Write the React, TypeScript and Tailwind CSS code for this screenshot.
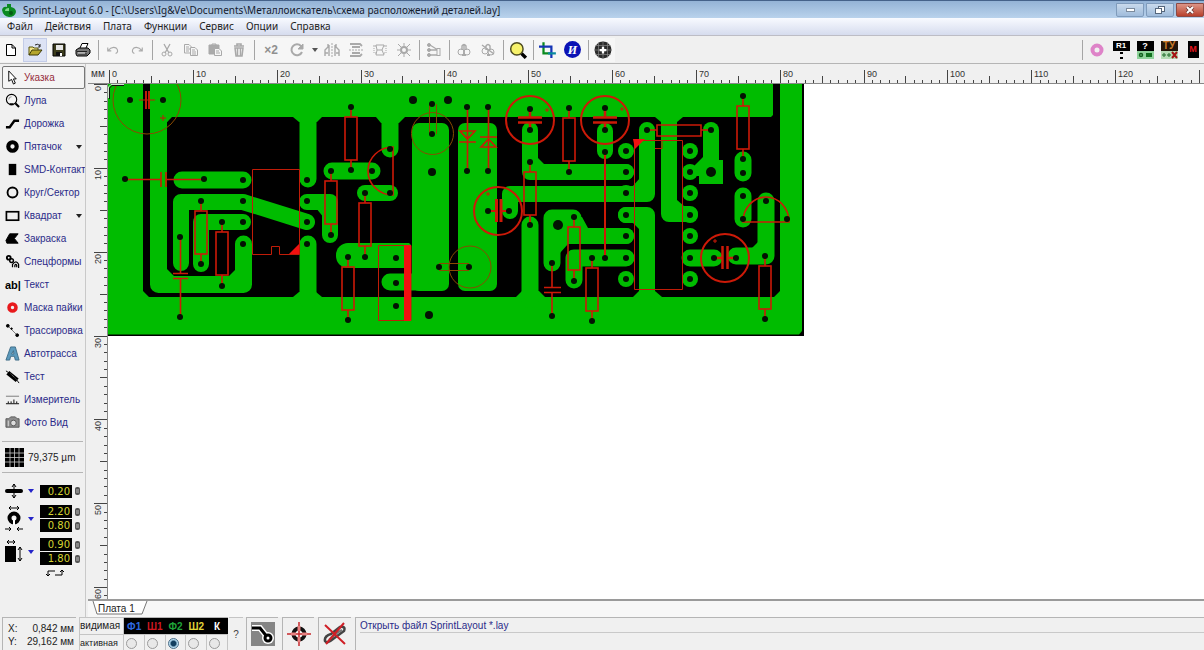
import React, { useEffect, useState } from "react";

interface ToolItem {
  label: string;
  icon: React.ReactNode;
  menu?: boolean;
}

const Icon: React.FC<{ children: React.ReactNode; className?: string }> = ({
  children,
  className = "w-4 h-4",
}) => (
  <svg viewBox="0 0 16 16" className={`${className} shrink-0`} fill="none" stroke="currentColor">
    {children}
  </svg>
);

const menuItems = ["Файл", "Действия", "Плата", "Функции", "Сервис", "Опции", "Справка"];

const tools: ToolItem[] = [
  {
    label: "Указка",
    icon: <path d="M4 1 V12 L7 10 L9 15 L11 14 L9 9.500 H12 Z" fill="#fff" />,
  },
  {
    label: "Лупа",
    icon: (
      <>
        <circle cx="7" cy="7" r="5.500" strokeWidth="1.200" fill="#f4f4f4" />
        <path d="M4 7 A3 3 0 0 1 7 4" stroke="#888" />
        <path d="M5 12 H9 M11 11 L15 15" strokeWidth="2.200" />
      </>
    ),
  },
  {
    label: "Дорожка",
    icon: <path d="M1 12 H5 L10 5 H15" strokeWidth="2.600" />,
  },
  {
    label: "Пятачок",
    menu: true,
    icon: <circle cx="8" cy="8" r="4.500" strokeWidth="4.400" />,
  },
  {
    label: "SMD-Контакт",
    icon: <rect x="4" y="2" width="8" height="12" fill="#000" stroke="none" />,
  },
  {
    label: "Круг/Сектор",
    icon: <circle cx="8" cy="8" r="5.300" strokeWidth="2" />,
  },
  {
    label: "Квадрат",
    menu: true,
    icon: <rect x="1.500" y="4" width="13" height="9" strokeWidth="1.800" />,
  },
  {
    label: "Закраска",
    icon: <path d="M1 10 L5 3 H14 L10 8 L14 13 H2 Z" fill="#000" />,
  },
  {
    label: "Спецформы",
    icon: (
      <>
        <circle cx="4" cy="4" r="2" strokeWidth="2" />
        <circle cx="7" cy="7" r="2" strokeWidth="1.500" />
        <path d="M8 14 V11 Q12 6 14.500 11 V15 M10.500 14 V12 Q11.500 10 12.500 12 V14" strokeWidth="1.300" />
      </>
    ),
  },
  { label: "Текст", icon: null },
  {
    label: "Маска пайки",
    icon: <circle cx="8" cy="8" r="3.700" stroke="#e8191c" strokeWidth="3.800" />,
  },
  {
    label: "Трассировка",
    icon: (
      <>
        <path d="M3 3 L13 13" stroke="#777" />
        <circle cx="3" cy="3" r="1.500" fill="#000" />
        <circle cx="7" cy="6" r="0.800" fill="#000" />
        <circle cx="13" cy="13" r="1.500" fill="#000" />
      </>
    ),
  },
  {
    label: "Автотрасса",
    icon: (
      <path
        d="M1 15 L6 1 H11 L15 15 H11 L10 11 H6 L5 15 Z M7 8.500 H9.500 L9 5 Z"
        fill="#5c9abd"
        stroke="#3f6d88"
      />
    ),
  },
  {
    label: "Тест",
    icon: (
      <>
        <path d="M1 2 L4 4 M12 11 L15 15" />
        <path d="M3 4 L13 12" strokeWidth="5" />
        <path d="M6 5 L12 11" stroke="#999" strokeDasharray="1 1" />
      </>
    ),
  },
  {
    label: "Измеритель",
    icon: (
      <>
        <path d="M1 4.500 H15" stroke="#777" />
        <path d="M1 12.500 H15 M3.500 12 V10 M6.500 12 V10 M9.500 12 V8 M12.500 12 V10" />
      </>
    ),
  },
  {
    label: "Фото Вид",
    icon: (
      <>
        <path d="M1 4 H4 L6 2 H11 L13 4 H15 V13 H1 Z" fill="#8b8b8b" stroke="#555" />
        <circle cx="9" cy="8.500" r="3" fill="#ddd" stroke="#555" />
        <path d="M3.500 6 V12" stroke="#ddd" />
      </>
    ),
  },
];

const Separator = () => (
  <div className="w-[6px] h-6 flex justify-center shrink-0">
    <div className="w-px h-5 self-center bg-[#a5a5a5]" />
  </div>
);

const ToolButton: React.FC<{
  label: string;
  active?: boolean;
  disabled?: boolean;
  children: React.ReactNode;
}> = ({ label, active, disabled, children }) => (
  <button
    aria-label={label}
    disabled={disabled}
    className={`w-6 h-6 shrink-0 flex items-center justify-center ${
      active ? "bg-[#dde3f5] border border-[#c3cce8]" : ""
    } ${disabled ? "text-[#a9a9a9]" : "text-black"}`}
  >
    {children}
  </button>
);

const TitleBar = () => (
  <header className="h-[18px] shrink-0 flex items-center border-t border-[#45628a] bg-linear-to-b from-[#94b3d6] to-[#b9d2ec]">
    <svg viewBox="0 0 16 16" className="w-4 h-4 ml-px">
      <path d="M1 8 Q2 4 6 5 L6 2 H10 V5 Q15 6 15 10 Q14 15 8 15 Q2 14 1 8 Z" fill="#0a8a22" />
      <path d="M4 9 Q4 6 8 6 V9 Z" fill="#7fd88a" />
      <circle cx="10" cy="11" r="2" fill="#065c14" />
    </svg>
    <h1 className="ml-[6px] flex-1 text-[10px] leading-4 text-[#16202e] font-['Noto_Sans',sans-serif] whitespace-nowrap">
      Sprint-Layout 6.0 - [C:\Users\Ig&amp;Ve\Documents\Металлоискатель\схема расположений деталей.lay]
    </h1>
    <div className="flex gap-[2px] h-[14px]">
      <button
        aria-label="Свернуть"
        className="w-7 rounded-b-xs border border-[#7f9bbb] bg-linear-to-b from-[#c9daec] to-[#a0bcdb] flex items-center justify-center"
      >
        <span className="w-[9px] h-1 border border-[#7c8b9d] bg-white" />
      </button>
      <button
        aria-label="Восстановить"
        className="w-7 rounded-b-xs border border-[#7f9bbb] bg-linear-to-b from-[#c9daec] to-[#a0bcdb] flex items-center justify-center"
      >
        <svg viewBox="0 0 12 10" className="w-3 h-[10px]" fill="#fff" stroke="#56677c">
          <rect x="4.500" y="1.500" width="6" height="5" />
          <rect x="1.500" y="3.500" width="6" height="5" />
        </svg>
      </button>
      <button
        aria-label="Закрыть"
        className="w-7 rounded-b-xs border border-[#8c4a44] bg-linear-to-b from-[#dc9587] to-[#b8402c] flex items-center justify-center"
      >
        <svg viewBox="0 0 12 10" className="w-3 h-[10px]">
          <path d="M3 2 L9 8 M9 2 L3 8" stroke="#6a3a36" strokeWidth="3.600" />
          <path d="M3 2 L9 8 M9 2 L3 8" stroke="#fff" strokeWidth="2" />
        </svg>
      </button>
    </div>
  </header>
);

const Toolbar = () => (
  <div className="h-7 shrink-0 flex items-center border-b border-[#b5b5b5] bg-[#f0f0f0]">
    <div className="flex items-center -ml-px bg-[#f6f6f6]">
      <ToolButton label="Новый">
        <Icon>
          <path d="M3.500 2.500 H9 L12.500 6 V13.500 H3.500 Z M9 2.500 V6 H12.500" fill="#fff" />
        </Icon>
      </ToolButton>
      <ToolButton label="Открыть" active>
        <Icon>
          <path d="M2 13 V5 H6 L7 6 H11 V8" fill="#f2e58a" stroke="#55520a" />
          <path d="M2 13 L5 8 H15 L11 13 Z" fill="#b5a62e" stroke="#3d3a08" />
          <path d="M8 3 Q11 1 13 4 M13 2 V5 H11" stroke="#222" />
        </Icon>
      </ToolButton>
      <ToolButton label="Сохранить">
        <Icon>
          <path d="M2 2 H14 V14 H2 Z" fill="#3c3c1c" />
          <rect x="5" y="3" width="7" height="5" fill="#e6e6e6" stroke="none" />
          <rect x="5" y="10" width="6" height="4" fill="#111" stroke="none" />
          <rect x="9" y="11" width="2" height="3" fill="#fff" stroke="none" />
        </Icon>
      </ToolButton>
      <ToolButton label="Печать">
        <Icon>
          <path d="M5 6 L7 1.500 H13 L11 6" fill="#fff" />
          <path d="M1 8 L4 6 H13 L15 8 V11 L12 14 H2 L1 12 Z" fill="#777" />
          <path d="M2 9.500 H12 M3 12 H12" stroke="#222" />
          <path d="M3 11 H10" stroke="#eee" />
        </Icon>
      </ToolButton>
      <Separator />
      <ToolButton label="Отменить" disabled>
        <Icon className="w-[14px] h-[14px]">
          <path d="M2 5 V9 H6 M2 9 Q7 3 12 6 Q15 10 11 12" strokeWidth="1.300" />
        </Icon>
      </ToolButton>
      <ToolButton label="Повторить" disabled>
        <Icon className="w-[14px] h-[14px]">
          <path d="M14 5 V9 H10 M14 9 Q9 3 4 6 Q1 10 5 12" strokeWidth="1.300" />
        </Icon>
      </ToolButton>
      <Separator />
      <ToolButton label="Вырезать" disabled>
        <Icon>
          <path d="M5 2 L10 11 M11 2 L6 11" strokeWidth="1.300" />
          <circle cx="5" cy="12" r="2" />
          <circle cx="11" cy="12" r="2" />
        </Icon>
      </ToolButton>
      <ToolButton label="Копировать" disabled>
        <Icon>
          <path d="M1.500 2.500 H6 L8.500 5 V11 H1.500 Z M3 5 H6 M3 7 H7 M3 9 H6" />
          <path d="M7.500 5.500 H12 L14.500 8 V13.500 H7.500 Z M9 8 H12 M9 10 H13 M9 12 H13" fill="#f6f6f6" />
        </Icon>
      </ToolButton>
      <ToolButton label="Вставить" disabled>
        <Icon>
          <path d="M2 3 H12 V12 H2 Z" fill="#aaa" />
          <path d="M5 2 H9 V4 H5 Z" />
          <path d="M7.500 6.500 H12 L14.500 9 V13.500 H7.500 Z M9 9 H12 M9 11 H13" fill="#f6f6f6" />
        </Icon>
      </ToolButton>
      <ToolButton label="Удалить" disabled>
        <Icon>
          <path d="M3 4 H13 M6 4 V2 H10 V4" strokeWidth="1.600" />
          <path d="M4 6 H12 L11 14 H5 Z M6.500 6 V14 M9.500 6 V14" strokeWidth="1.500" />
        </Icon>
      </ToolButton>
      <Separator />
      <button
        disabled
        className="w-7 h-6 shrink-0 text-[12px] leading-6 font-bold text-[#909090] font-['Liberation_Sans',sans-serif]"
      >
        ×2
      </button>
      <ToolButton label="Повернуть" disabled>
        <Icon>
          <path d="M12 4 A5.500 5.500 0 1 0 13 10" strokeWidth="2" />
          <path d="M14 2 V7 H9 Z" fill="currentColor" />
        </Icon>
      </ToolButton>
      <button aria-label="Угол поворота" className="w-[11px] h-6 shrink-0 flex items-center justify-center">
        <svg viewBox="0 0 6 4" className="w-[6px] h-1">
          <path d="M0 0 H6 L3 4 Z" fill="#555" />
        </svg>
      </button>
      <ToolButton label="Отразить по горизонтали" disabled>
        <Icon>
          <path d="M8 1 V15" strokeDasharray="2 1" />
          <path d="M1 14 V8 L4 5 V2 M1 11 H4 M5 3 V14 M15 14 V8 L12 5 V2 M15 11 H12 M11 3 V14" strokeWidth="1.400" />
        </Icon>
      </ToolButton>
      <ToolButton label="Отразить по вертикали" disabled>
        <Icon>
          <path d="M1 8 H15" strokeDasharray="2 1" />
          <path d="M2 2 H12 L14 4 M4 5 H12 M2 14 H12 L14 12 M4 11 H12" strokeWidth="1.800" />
        </Icon>
      </ToolButton>
      <ToolButton label="Выровнять" disabled>
        <Icon>
          <path d="M1 4 H4 M12 4 H15 M4 3 H12 L10 8 H5 Z M5 8 L4 13 H12 L10 8" />
          <path d="M2 6 V11 H4 M14 6 V11 H12" strokeDasharray="1 1" />
        </Icon>
      </ToolButton>
      <ToolButton label="Привязать к сетке" disabled>
        <Icon>
          <circle cx="8" cy="8" r="3" strokeWidth="2" />
          <path d="M8 1 V4 M8 12 V15 M1 8 H4 M12 8 H15 M2 2 L5 5 M11 5 L14 2 M2 14 L5 11 M11 11 L14 14" />
        </Icon>
      </ToolButton>
      <Separator />
      <ToolButton label="Соединения" disabled>
        <Icon>
          <path d="M4 3 L12 8 V13 H4 M4 8 H12" strokeWidth="1.300" />
          <circle cx="3" cy="3" r="1.500" fill="currentColor" />
          <circle cx="3" cy="8" r="1.500" fill="currentColor" />
          <circle cx="3" cy="13" r="1.500" fill="currentColor" />
          <rect x="11" y="6.500" width="3" height="7" fill="#f6f6f6" />
        </Icon>
      </ToolButton>
      <Separator />
      <ToolButton label="Группировать" disabled>
        <Icon>
          <path d="M6 8 V4 Q8 1 10 4 V8 M8 3 V13" strokeWidth="1.400" />
          <circle cx="5" cy="10" r="3" />
          <circle cx="11" cy="10" r="3" />
          <path d="M6 13 H10" strokeWidth="2" />
        </Icon>
      </ToolButton>
      <ToolButton label="Разгруппировать" disabled>
        <Icon>
          <path d="M6 8 V4 Q8 1 10 4 V8 M2 3 L14 12" strokeWidth="1.400" />
          <circle cx="5" cy="9" r="3" />
          <circle cx="11" cy="10" r="3" />
          <path d="M7 13 H10" strokeWidth="2" />
        </Icon>
      </ToolButton>
      <Separator />
      <ToolButton label="Масштаб">
        <Icon className="w-[18px] h-[18px]">
          <path d="M11 11 L15 15" strokeWidth="3" />
          <circle cx="7" cy="7" r="5.500" fill="#f7f26b" stroke="#4d4b20" strokeWidth="1.300" />
        </Icon>
      </ToolButton>
      <Separator />
      <ToolButton label="Обрезка">
        <Icon className="w-[18px] h-[18px]">
          <path d="M4 1 V11 H11" stroke="#0a8a1e" strokeWidth="2" />
          <path d="M0 5 H11 V15" stroke="#1535b5" strokeWidth="2" />
          <path d="M8 11 H15" stroke="#0a8a9e" strokeWidth="2" />
        </Icon>
      </ToolButton>
      <button
        aria-label="Информация"
        className="w-[17px] h-[17px] mx-1 shrink-0 rounded-full bg-[#0b12b5] text-white text-[12px] leading-4 italic font-bold font-['Liberation_Serif',serif]"
      >
        И
      </button>
      <Separator />
      <ToolButton label="Металлизация">
        <Icon className="w-[18px] h-[18px]">
          <circle cx="8" cy="8" r="4.500" stroke="#2b2b2b" strokeWidth="6" />
          <path
            d="M4 1 V15 M8 0 V16 M12 1 V15 M1 4 H15 M0 8 H16 M1 12 H15"
            stroke="#8a8a8a"
            strokeWidth="0.600"
          />
          <path d="M8 5 V11 M5 8 H11" stroke="#fff" strokeWidth="2" />
        </Icon>
      </ToolButton>
    </div>
    <div className="flex-1" />
    <div className="flex items-center">
      <Separator />
      <ToolButton label="Переходное отверстие">
        <Icon>
          <circle cx="8" cy="8" r="4.500" stroke="#de83c8" strokeWidth="4" />
        </Icon>
      </ToolButton>
      <button className="w-6 h-6 shrink-0 flex flex-col items-center justify-center">
        <span className="w-[17px] h-[10px] bg-black text-white text-[8px] leading-[10px] font-bold font-['Liberation_Sans',sans-serif]">
          R1
        </span>
        <span className="w-[3px] h-[7px] border-y-2 border-black mt-px" />
      </button>
      <button className="w-6 h-6 shrink-0 flex flex-col items-center justify-center">
        <span className="w-[17px] h-[10px] bg-black text-white text-[9px] leading-[10px] font-bold font-['Liberation_Sans',sans-serif]">
          ?
        </span>
        <svg viewBox="0 0 17 8" className="w-[17px] h-2">
          <rect width="17" height="8" fill="#8fd39b" />
          <circle cx="4" cy="4" r="1.500" fill="none" stroke="#12611e" strokeWidth="1.500" />
          <rect x="9" y="2" width="6" height="4" fill="#12701e" />
        </svg>
      </button>
      <button className="w-6 h-6 shrink-0 flex flex-col items-center justify-center">
        <span className="w-[17px] h-[10px] bg-[#24160a] text-[#c87a28] text-[10px] leading-[10px] font-bold font-['Liberation_Sans',sans-serif]">
          ТУ
        </span>
        <svg viewBox="0 0 17 8" className="w-[17px] h-2">
          <rect width="17" height="8" fill="#b5dcb5" />
          <circle cx="3" cy="4" r="1.200" fill="none" stroke="#12611e" />
          <circle cx="8" cy="4" r="1.200" fill="none" stroke="#12611e" />
          <path d="M11 1 L16 7 M16 1 L11 7" stroke="#a51414" strokeWidth="2" />
        </svg>
      </button>
      <button className="w-6 h-6 shrink-0 flex items-center justify-center -mr-px">
        <span className="w-[11px] h-[17px] bg-black text-[#e0141c] text-[9px] leading-[17px] font-bold font-['Liberation_Sans',sans-serif]">
          M
        </span>
      </button>
    </div>
  </div>
);

const Arrow = () => (
  <svg viewBox="0 0 6 4" className="w-[6px] h-1 shrink-0">
    <path d="M0 0 H6 L3 4 Z" fill="#2424c8" />
  </svg>
);

const SizeInput: React.FC<{ label: string; value: string }> = ({ label, value }) => (
  <div className="flex items-center gap-[3px]">
    <input
      aria-label={label}
      defaultValue={value}
      className="w-8 h-[13px] bg-black text-[#d6d432] text-[10px] leading-3 text-right pr-[2px] font-['DejaVu_Sans',sans-serif]"
    />
    <span className="w-[5px] h-2 rounded-xs border-x border-y-2 border-[#555] bg-[#888]" />
  </div>
);

const SidePanel = () => {
  const [active, setActive] = useState("Указка");

  return (
    <aside className="w-[86px] shrink-0 pt-[2px] bg-[#f0f0f0] border-r border-[#c9c9c9] overflow-hidden font-['Liberation_Sans',sans-serif]">
      {tools.map((tool) => (
        <button
          key={tool.label}
          onClick={() => setActive(tool.label)}
          className={`w-[83px] h-[23px] ml-[2px] pl-[2px] flex items-center text-[10px] whitespace-nowrap border ${
            active === tool.label
              ? "border-[#777] rounded-xs bg-[#f4f4f4] text-[#962c3c]"
              : "border-transparent text-[#2a2a88]"
          }`}
        >
          {tool.icon ? (
            <Icon className="w-[15px] h-[15px] text-black">{tool.icon}</Icon>
          ) : (
            <span className="w-[15px] text-[11px] leading-3 font-bold text-black">ab|</span>
          )}
          <span className="ml-1">{tool.label}</span>
          {tool.menu && (
            <svg viewBox="0 0 6 4" className="w-[6px] h-1 ml-auto mr-[2px]">
              <path d="M0 0 H6 L3 4 Z" fill="#222" />
            </svg>
          )}
        </button>
      ))}

      <div className="mt-[7px] mx-[2px] h-8 flex items-center gap-1 border-y border-[#b5b5b5] pl-[3px] text-[10px] text-[#222]">
        <svg viewBox="0 0 19 19" className="w-[19px] h-[19px]">
          <rect width="19" height="19" fill="#000" />
          <path
            d="M0 5 H19 M0 9.500 H19 M0 14 H19 M5 0 V19 M9.500 0 V19 M14 0 V19"
            stroke="#c9c9c9"
            strokeWidth="0.800"
          />
        </svg>
        <span>79,375 µm</span>
      </div>

      <div className="mt-[10px] pl-[5px] flex flex-col gap-[6px]">
        <div className="flex items-center gap-[5px]">
          <Icon className="w-[18px] h-4 text-black">
            <path d="M1 8 H15" strokeWidth="4" strokeLinecap="round" />
            <path d="M8 1 V15 M6 4 L8 1 L10 4 M6 12 L8 15 L10 12" />
          </Icon>
          <Arrow />
          <div className="ml-[1px]">
            <SizeInput label="Ширина дорожки" value="0.20" />
          </div>
        </div>
        <div className="flex items-center gap-[5px]">
          <svg viewBox="0 0 18 27" className="w-[18px] h-[27px]" fill="none" stroke="#000">
            <path d="M4 3 H14 M6 1 L4 3 L6 5 M12 1 L14 3 L12 5" />
            <circle cx="9" cy="13" r="4.500" strokeWidth="4" />
            <path d="M9 13 V20" stroke="#fff" strokeWidth="2" />
            <path d="M0 24 H6 M4 22 L6 24 L4 26 M18 24 H12 M14 22 L12 24 L14 26" />
          </svg>
          <Arrow />
          <div className="ml-[1px] flex flex-col gap-px">
            <SizeInput label="Внешний диаметр" value="2.20" />
            <SizeInput label="Диаметр отверстия" value="0.80" />
          </div>
        </div>
        <div className="flex items-center gap-[5px]">
          <svg viewBox="0 0 18 27" className="w-[18px] h-[27px]" fill="none" stroke="#000">
            <path d="M2 4 H10 M4 2 L2 4 L4 6 M8 2 L10 4 L8 6" />
            <rect x="0" y="8" width="11" height="16" fill="#000" stroke="none" />
            <path d="M15 9 V23 M13 12 L15 9 L17 12 M13 20 L15 23 L17 20" />
          </svg>
          <Arrow />
          <div className="ml-[1px] flex flex-col gap-px">
            <SizeInput label="Ширина контакта" value="0.90" />
            <SizeInput label="Высота контакта" value="1.80" />
          </div>
        </div>
      </div>
      <button aria-label="Поменять местами" className="block ml-[46px] mt-1">
        <svg viewBox="0 0 18 8" className="w-[18px] h-2" fill="none" stroke="#000">
          <path d="M2 7 V2 H9 M0 5 L2 7 L4 5 M16 1 V6 H9 M14 3 L16 1 L18 3" />
        </svg>
      </button>
    </aside>
  );
};

// ruler scale: 84 px for 10 mm
const SCALE = 8.384;
const tickPos = (mm: number) => Math.round(mm * SCALE);
const marksFor = (size: number) =>
  Array.from({ length: Math.max(0, Math.floor(size / SCALE) + 1) }, (_, i) => i);

// canvas area = window minus the bars round it
const useCanvasSize = () => {
  const read = () => ({ width: window.innerWidth - 108, height: window.innerHeight - 136 });
  const [size, setSize] = useState(read);

  useEffect(() => {
    const onResize = () => setSize(read());
    window.addEventListener("resize", onResize);
    return () => window.removeEventListener("resize", onResize);
  }, []);

  return size;
};

const TopRuler: React.FC<{ width: number }> = ({ width }) => (
  <div className="h-5 shrink-0 flex bg-[#f0f0f0] border-b border-[#888] font-['Liberation_Sans',sans-serif]">
    <span className="w-5 shrink-0 pl-[3px] text-[10px] leading-5 text-[#333]">мм</span>
    <svg className="flex-1 h-[19px]">
      {marksFor(width).map((mm) => (
        <g key={mm}>
          <rect
            x={tickPos(mm) + 1}
            y={mm % 10 === 0 ? 6 : mm % 5 === 0 ? 12 : 16}
            width="1"
            height="14"
            fill="#444"
          />
          {mm % 10 === 0 && tickPos(mm) + 20 < width && (
            <text x={tickPos(mm) + 4} y="13" fontSize="9" fill="#333">
              {mm}
            </text>
          )}
        </g>
      ))}
    </svg>
  </div>
);

const SideRuler: React.FC<{ height: number }> = ({ height }) => (
  <svg className="w-5 h-full shrink-0 bg-[#f0f0f0] border-r border-[#888] font-['Liberation_Sans',sans-serif]">
    {marksFor(height).map((mm) => (
      <g key={mm}>
        <rect
          x={mm % 10 === 0 ? 6 : mm % 5 === 0 ? 12 : 16}
          y={tickPos(mm)}
          width="14"
          height="1"
          fill="#444"
        />
        {mm % 10 === 0 && (
          <text
            transform={`translate(13 ${tickPos(mm) + 2}) rotate(-90)`}
            textAnchor="end"
            fontSize="9"
            fill="#333"
          >
            {mm}
          </text>
        )}
      </g>
    ))}
  </svg>
);

// x, y, radius
const holes: [number, number, number][] = [
  [130, 100, 3], [163, 100, 3], [125, 179, 3], [204, 179, 3], [201, 201, 3],
  [180, 237, 3], [222, 222, 3], [201, 264, 3], [222, 286, 3], [180, 317, 3],
  [243, 180, 3], [243, 201, 3], [243, 222, 3], [243, 244, 3],
  [307, 180, 3], [307, 201, 3], [307, 222, 3], [307, 244, 3],
  [351, 107, 3], [331, 171, 3], [351, 170, 3], [372, 171, 3], [390, 149, 3],
  [365, 193, 3], [390, 193, 3], [331, 235, 3], [348, 257, 3], [365, 257, 3],
  [396, 258, 3], [396, 283, 3], [396, 306, 3], [348, 320, 3], [429, 315, 4],
  [413, 100, 4], [432, 104, 3], [448, 100, 4], [432, 134, 3], [432, 172, 4],
  [467, 107, 3], [488, 107, 3], [467, 171, 3], [488, 171, 3], [488, 211, 3],
  [439, 267, 3], [469, 267, 3], [530, 109, 3], [530, 130, 3], [530, 162, 3],
  [569, 108, 3], [569, 172, 3], [605, 108, 3], [605, 130, 3], [605, 152, 3],
  [509, 211, 3], [530, 225, 3], [558, 225, 5], [574, 217, 3], [552, 263, 3],
  [552, 316, 3], [574, 281, 3], [592, 258, 3], [605, 258, 3], [592, 321, 3],
  [647, 130, 3], [711, 130, 3], [711, 172, 5], [743, 96, 3], [743, 159, 3],
  [743, 173, 3], [743, 196, 3], [743, 219, 3], [766, 201, 3], [787, 219, 3],
  [765, 256, 3], [765, 319, 3], [714, 258, 3], [736, 258, 3],
];

const dipRows = [151, 172, 193, 215, 236, 258, 279];

// x, upper pad, lower pad
const resistors: [number, number, number][] = [
  [201, 201, 264], [222, 222, 286], [351, 107, 170], [331, 171, 235],
  [365, 193, 257], [348, 257, 320], [530, 162, 225], [569, 108, 172],
  [574, 217, 281], [592, 258, 321], [743, 96, 159], [765, 256, 319],
];

const Board = () => (
  <svg viewBox="108 84 696 252" className="w-[696px] h-[252px] block shrink-0">
    <rect x="108" y="84" width="696" height="252" fill="#000" />
    <path d="M108 84 H802 V331 L799 334.500 H108 Z" fill="#00bc00" />
    <path
      d="M143 84 H160 V117 H167 V122 L172 117 H771 L773 115 V84 H780 V291 L774 297 H149 L143 291 Z"
      fill="#000"
    />

    {/* copper */}
    <g fill="#00bc00">
      <path d="M160 84 H170 V118 L167 122 H160 Z" />
      <path d="M293 117 L299 122 H317 L322 117 Z" />
      <path d="M376 117 L381 123 H399 L405 117 Z" />
      <path d="M655 117 L661 122 H677 L683 117 Z" />
      <path d="M293 297 L299 292 H316 L322 297 Z" />
      <path d="M516 297 L522 291 H539 L545 297 Z" />
      <path d="M633 297 L639 291 H655 L662 297 Z" />
      <path d="M166 268 V277 H175 Z M236 269 V277 H228 Z" />
      <path d="M324 208 V218 L316 208 Z" />
      <rect x="412" y="123" width="37" height="168" rx="7" />
      <rect x="458" y="123" width="39" height="168" rx="7" />
      <rect x="336" y="243" width="72" height="25" rx="12" />
      <path d="M390 243 H409 L411 245 V268 H390 Z" />
      <path d="M538 158 V166 H546 Z" />
      <path d="M552 217 H582 L588 228 V244 H568 L560 253 H552 Z" />
      <path d="M703 157 L694 166 V176 H699 V184 H723 V160 H719 Z" />
      <path d="M677 200 V210 H686 L684 206 Z" />
      <path d="M760 240 V250 H750 Z" />
      <path d="M632 222 H640 V230 Z M640 178 V187 H632 Z" />
    </g>
    <g fill="none" stroke="#00bc00" strokeWidth="17" strokeLinecap="round" strokeLinejoin="round">
      <path d="M158.500 84 V284.500 H243.500 V244" />
      <path d="M182 180 H243" />
      <path d="M308 84 V179 M308 244 V300" />
      <path d="M332 171 H372" />
      <path d="M390 84 V149" />
      <path d="M390 282 H420" />
      <path d="M530 300 V225" />
      <path d="M552 263 V218 H573" />
      <path d="M574 280 V258 H626" />
      <path d="M743 160 V173 M743 196 V219" />
      <path d="M766 201 V256 H736 M690 258 H714" />
    </g>
    <g fill="none" stroke="#00bc00" strokeWidth="16" strokeLinecap="round" strokeLinejoin="round">
      <path d="M181 263 V202 H243 L307 222" />
      <path d="M201 264 V222 H243" />
      <path d="M307 202 H330 V235" />
      <path d="M365 193 H390" />
      <path d="M530 130 V172 H626" />
      <path d="M605 131 V151" />
      <path d="M510 211 V194 H647 V130" />
      <path d="M574 236 H626" />
      <path d="M626 215 H647 V300" />
      <path d="M669 84 V214 H690" />
      <path d="M711 130 V165" />
    </g>
    {dipRows.map((y) => (
      <g key={y}>
        <circle cx="626" cy={y} r="8" fill="#00bc00" />
        <circle cx="690" cy={y} r="8" fill="#00bc00" />
        <circle cx="626" cy={y} r="3" fill="#031203" />
        <circle cx="690" cy={y} r="3" fill="#031203" />
      </g>
    ))}

    {/* silkscreen */}
    <g fill="none" stroke="#c01c08" strokeWidth="1">
      <circle cx="147" cy="100" r="34" stroke="#8a4a00" />
      <path d="M139 100 H155 M163 115 V121 M160 118 H166" />
      <path d="M146 91 V109 M149 91 V109" strokeWidth="2" />
      <path d="M252.500 169.500 H299.500 V254.500 H279.500 V246.500 H271.500 V254.500 H252.500 Z" />
      <circle cx="432.500" cy="133.500" r="21" stroke="#8a4a00" />
      <path d="M429.500 104 V134 M436.500 104 V134" stroke="#8a4a00" />
      <circle cx="470" cy="267" r="21" stroke="#8a4a00" />
      <path d="M439 263.500 H469 M439 270.500 H469" stroke="#8a4a00" />
      <path d="M378.500 245.500 H411 V320.500 H378.500 Z" />
      <path d="M634.500 140.500 H682.500 V289.500 H634.500 Z M655 148.500 H662 V141" />
    </g>
    <g fill="#f01010">
      <rect x="404" y="245" width="7" height="76" />
      <path d="M299 244 V254 H289 Z" />
      <path d="M633 139 H645 L635 149 Z" />
    </g>
    <g fill="none" stroke="#cc1a08" strokeWidth="1.600">
      {resistors.map(([x, y1, y2]) => {
        const top = Math.round((y1 + y2) / 2) - 22;
        return (
          <g key={`${x}-${y1}`}>
            <rect x={x - 6} y={top} width="12" height="43" />
            <path d={`M${x} ${y1} V${top} M${x} ${y2} V${top + 43}`} />
          </g>
        );
      })}
      <path d="M647 130 H657 M701 130 H711 M657 125 H701 V136 H657 Z" />
      <path d="M125 179.500 H161 M161 172 V187 M204 179.500 H166 M166 172 V187" />
      <path d="M180.500 237 V273 M173 273.500 H188 M173 278.500 H188 M180.500 278 V317" />
      <path d="M552 263 V287 M544 287.500 H561 M544 292.500 H561 M552 292 V316" />
      <path d="M393 147 A25 24 0 0 0 393 195 Z" />
      <path d="M467.500 107 V171 M460 131 H475 L467.500 139 Z M459 142 H476" />
      <path d="M488.500 107 V171 M481 147 H496 L488.500 139 Z M480 137 H497" />
      <path d="M743 222 A23 25 0 0 1 789 222 Z" />
      <path d="M605 152 V258" strokeWidth="2" />
    </g>
    <g fill="none" stroke="#cc1a08" strokeWidth="2">
      <circle cx="498" cy="211" r="24" />
      <circle cx="530" cy="120" r="24" />
      <circle cx="605" cy="120" r="24" />
      <circle cx="725" cy="258" r="24" />
      <path d="M496.500 199 V222 M501 199 V222" strokeWidth="3" />
      <path d="M488 211 H496 M502 211 H509" />
      <path d="M518 117.500 H542 M518 122.500 H542 M530 109 V117 M530 122 V130" strokeWidth="2.500" />
      <path d="M593 117.500 H617 M593 122.500 H617 M605 109 V117 M605 122 V130" strokeWidth="2.500" />
      <path d="M722.500 246 V269 M727.500 246 V269 M714 258 H722 M728 258 H736" strokeWidth="2.500" />
      <path
        d="M488 192 V196 M486 194 H490 M547 108 V112 M545 110 H549 M622 107 V111 M620 109 H624 M715 239 V243 M713 241 H717"
        strokeWidth="1"
      />
    </g>

    {holes.map(([x, y, r]) => (
      <circle key={`${x}-${y}`} cx={x} cy={y} r={r} fill="#031203" />
    ))}
    <path d="M109.500 99 V88 L112 85.500 H124" fill="none" stroke="#111" />
    <path d="M108.500 98 V87 L111 84.500 H124" fill="none" stroke="#cfe8cf" />
  </svg>
);

const layers = [
  { name: "Ф1", color: "text-[#2f6be0]" },
  { name: "Ш1", color: "text-[#d01820]" },
  { name: "Ф2", color: "text-[#1fa53a]" },
  { name: "Ш2", color: "text-[#e0d53a]" },
  { name: "К", color: "text-white" },
];

const StatusBar = () => {
  const [layer, setLayer] = useState("Ф2");

  return (
    <footer className="h-[33px] shrink-0 flex bg-[#f0f0f0] overflow-hidden text-[10px] text-[#222] font-['Liberation_Sans',sans-serif]">
      <dl className="w-[74px] ml-[2px] mr-[3px] shrink-0 pt-1 pl-[5px] grid grid-cols-[auto_1fr] content-start leading-[13px] border-t border-l border-[#b5b5b5]">
        <dt>X:</dt>
        <dd className="text-right pr-[2px]">0,842 мм</dd>
        <dt>Y:</dt>
        <dd className="text-right pr-[2px]">29,162 мм</dd>
      </dl>

      <table className="w-[149px] shrink-0 table-fixed border-collapse border-t border-[#b5b5b5]">
        <tbody>
          <tr className="h-[17px]">
            <th className="w-11 p-0 font-normal text-left border border-[#c5c5c5] text-[10px] leading-3">видимая</th>
            {layers.map((item) => (
              <td key={item.name} className="p-0 bg-black text-center">
                <button className={`text-[10px] leading-3 font-bold ${item.color}`}>{item.name}</button>
              </td>
            ))}
          </tr>
          <tr className="h-[17px]">
            <th className="w-11 p-0 font-normal text-left border border-[#c5c5c5] text-[9px] leading-3">активная</th>
            {layers.map((item) => (
              <td key={item.name} className="p-0 border border-[#c5c5c5]">
                <input
                  type="radio"
                  name="layer"
                  aria-label={item.name}
                  checked={layer === item.name}
                  onChange={() => setLayer(item.name)}
                  className="block ml-[2px] appearance-none w-[11px] h-[11px] rounded-full border border-[#9a9a9a] bg-[#e8e8e8] checked:border-[#4f6f88] checked:bg-radial checked:from-[#123f60] checked:from-35% checked:to-[#b5dcf0] checked:to-60%"
                />
              </td>
            ))}
          </tr>
        </tbody>
      </table>

      <button className="w-[14px] ml-px mr-[3px] shrink-0 border-t border-[#c5c5c5] text-[10px] text-[#444]">?</button>

      <div className="flex gap-1 shrink-0">
        <button
          aria-label="Автодорожка"
          className="w-8 h-full border-t border-l border-[#b5b5b5] flex items-center justify-center"
        >
          <svg viewBox="0 0 24 24" className="w-6 h-6">
            <rect width="24" height="24" fill="#858585" />
            <path d="M1 6 H9 L17 16" fill="none" stroke="#fff" strokeWidth="6" />
            <circle cx="17" cy="16" r="6" fill="#fff" />
            <path d="M1 6 H9 L17 16" fill="none" stroke="#000" strokeWidth="3" />
            <circle cx="17" cy="16" r="3" fill="#fff" stroke="#000" strokeWidth="3" />
          </svg>
        </button>
        <button
          aria-label="Захват"
          className="w-8 h-full border-t border-l border-[#b5b5b5] flex items-center justify-center"
        >
          <svg viewBox="0 0 24 24" className="w-6 h-6" fill="none">
            <circle cx="12" cy="12" r="5.500" stroke="#111" strokeWidth="4" />
            <path d="M12 0 V24 M0 12 H24" stroke="#c8282c" strokeWidth="1.500" />
            <path d="M12 4 V9 M12 15 V20 M4 12 H9 M15 12 H20" stroke="#e88080" strokeWidth="3" />
          </svg>
        </button>
        <button
          aria-label="Контроль"
          className="w-[33px] h-full border-t border-l border-[#b5b5b5] flex items-center justify-center"
        >
          <svg viewBox="0 0 24 24" className="w-6 h-6" fill="none">
            <path d="M2 19 Q1 14 8 12 L17 5 Q23 4 21 9 L10 17 Q4 22 2 19 Z" stroke="#444" strokeWidth="2.500" />
            <path d="M6 18 Q11 12 19 8" stroke="#777" strokeWidth="2" />
            <path d="M2 3 L22 22 M21 1 L3 22" stroke="#cf1f26" strokeWidth="2" />
          </svg>
        </button>
      </div>

      <div className="flex-1 ml-1 pl-1 border-t border-l border-[#b5b5b5]">
        <p className="h-[15px] leading-4 text-[#2a2a88] border-b border-[#c9c9c9]">Открыть файл SprintLayout *.lay</p>
      </div>
    </footer>
  );
};

const App: React.FC = () => {
  const { width, height } = useCanvasSize();

  return (
    <div className="h-screen flex flex-col overflow-hidden bg-[#f0f0f0]">
      <TitleBar />
      <nav className="h-[18px] shrink-0 flex items-center gap-3 pl-[7px] bg-linear-to-b from-[#f8faff] to-[#d6dcee] border-b border-[#bdbdc5] text-[10px] text-[#222] font-['Noto_Sans',sans-serif]">
        {menuItems.map((item) => (
          <button key={item}>{item}</button>
        ))}
      </nav>
      <Toolbar />

      <div className="flex-1 min-h-0 flex">
        <SidePanel />
        <main className="flex-1 min-w-0 flex flex-col pl-[2px]">
          <TopRuler width={width} />
          <div className="flex-1 min-h-0 flex overflow-hidden">
            <SideRuler height={height} />
            <div className="flex-1 min-w-0 overflow-hidden bg-white">
              <Board />
            </div>
          </div>
          <div className="h-[18px] shrink-0 border-t-2 border-[#9a9a9a] bg-[#f7f7f7] font-['Liberation_Sans',sans-serif]">
            <button className="relative block w-14 h-[14px] ml-1 pl-[6px] text-left text-[10px] leading-[13px] text-[#222]">
              <svg viewBox="0 0 56 14" className="absolute inset-0 w-14 h-[14px]">
                <path d="M1 0 L5 13 H50 L55 0" fill="#fff" stroke="#777" />
              </svg>
              <span className="relative">Плата 1</span>
            </button>
          </div>
        </main>
      </div>

      <StatusBar />
    </div>
  );
};

export default App;
